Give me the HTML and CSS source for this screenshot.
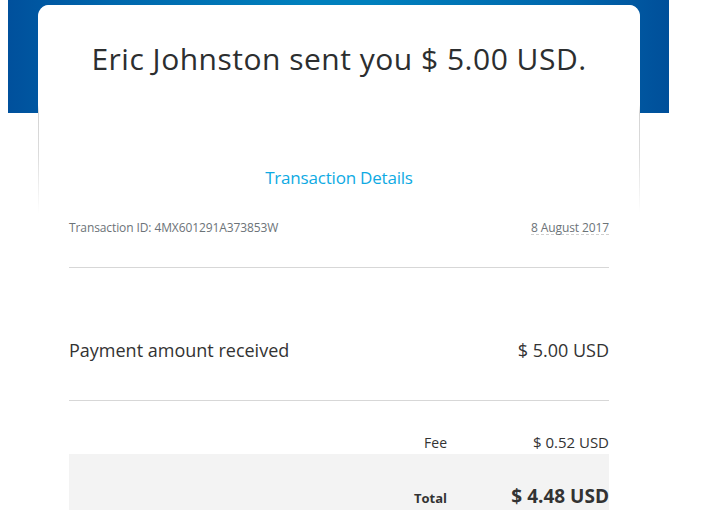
FILE: index.html
```html
<!DOCTYPE html>
<html>
<head>
<meta charset="utf-8">
<link rel="stylesheet" href="styles.css">
</head>
<body>
<div class="hero">
  <div class="page">
    <div class="card-edge">
      <div class="card">
        <h1 class="title">Eric Johnston sent you $ 5.00 USD.</h1>
        <div class="link">Transaction Details</div>
      </div>
    </div>
    <div class="details">
      <div class="meta">
        <span>Transaction ID: 4MX601291A373853W</span>
        <span class="date">8 August 2017</span>
      </div>
      <div class="amount">
        <span>Payment amount received</span>
        <span>$ 5.00 USD</span>
      </div>
      <div class="sums">
        <div class="row fee">
          <span class="label">Fee</span>
          <span class="value">$ 0.52 USD</span>
        </div>
        <div class="row total">
          <span class="label">Total</span>
          <span class="value">$ 4.48 USD</span>
        </div>
      </div>
    </div>
  </div>
</div>
</body>
</html>
```
FILE: styles.css
```css
html, body {
  margin: 0;
  padding: 0;
  background: #fff;
}
body {
  font-family: "Open Sans", "Noto Sans", sans-serif;
  color: #333;
  overflow: hidden;
}
.hero {
  width: 661px;
  margin-left: 8px;
  padding-top: 5px;
  background: linear-gradient(to right, #00509c 0%, #0066ac 15%, #0080bd 45%, #0080bd 55%, #0066ac 85%, #004f9a 100%) no-repeat;
  background-size: 100% 113px;
}
.page {
  width: 602px;
  margin-left: 30px;
}
.card-edge {
  padding: 0 1px;
  border-radius: 11px 11px 0 0;
  background: linear-gradient(to bottom, #ffffff 0px, #ffffff 100px, #d4d4d4 108px, #dcdcdc 150px, #ffffff 208px);
}
.card {
  background: #fff;
  border-radius: 10px 10px 0 0;
  height: 208px;
  padding-top: 34px;
  box-sizing: border-box;
  text-align: center;
}
.title {
  margin: 0;
  font-family: "Open Sans", sans-serif;
  font-weight: 400;
  font-size: 30px;
  letter-spacing: 0.5px;
  line-height: 40px;
  color: #2c2e2f;
}
.link {
  margin-top: 88px;
  font-size: 17px;
  letter-spacing: -0.2px;
  line-height: 22px;
  color: #0eaae3;
}
.details {
  padding: 0 31px;
}
.meta {
  display: flex;
  justify-content: space-between;
  font-size: 12px;
  letter-spacing: -0.1px;
  color: #6c7378;
  line-height: 14px;
  padding-top: 8px;
  padding-bottom: 32px;
  border-bottom: 1px solid #d7d7d7;
}
.date {
  border-bottom: 1px dashed #cfcfcf;
  line-height: 13px;
}
.amount {
  display: flex;
  justify-content: space-between;
  font-size: 18px;
  color: #333;
  line-height: 24px;
  padding-top: 70px;
  padding-bottom: 38px;
  border-bottom: 1px solid #d7d7d7;
}
.sums {
  padding-top: 30px;
}
.row {
  display: grid;
  grid-template-columns: 1fr 162px;
  align-items: baseline;
}
.row .label {
  text-align: right;
}
.row .value {
  text-align: right;
}
.fee {
  font-size: 15px;
  line-height: 22px;
  color: #333;
}
.fee .label {
  font-size: 14px;
}
.total {
  background: #f3f3f3;
  height: 70px;
  padding-top: 28px;
  box-sizing: border-box;
}
.total .label {
  font-size: 13px;
  font-weight: 700;
  line-height: 18px;
}
.total .value {
  font-size: 19px;
  font-weight: 700;
  line-height: 28px;
}
```
